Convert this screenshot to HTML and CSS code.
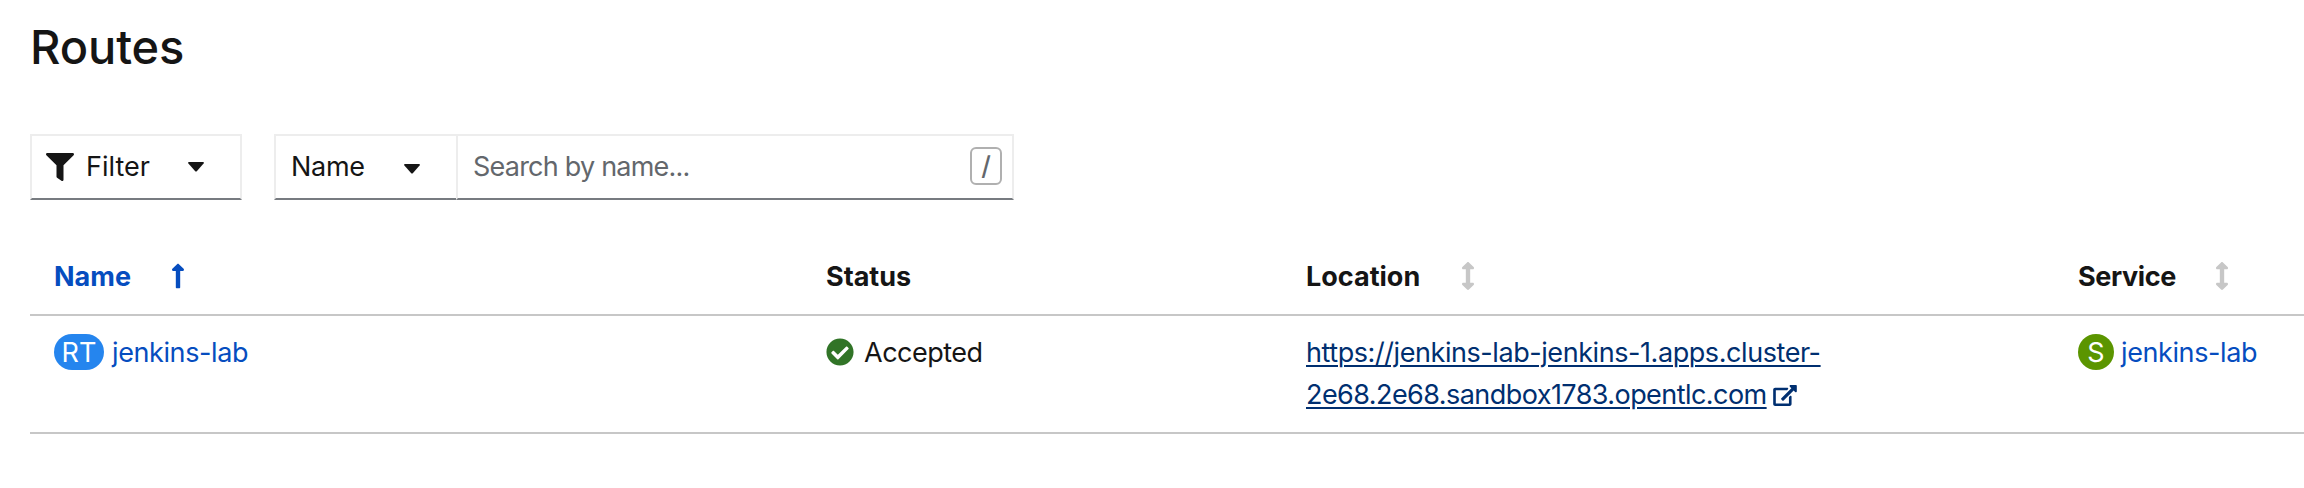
FILE: index.html
```
<!DOCTYPE html>
<html lang="en">
<head>
<meta charset="utf-8">
<title>Routes</title>
<link rel="stylesheet" href="styles.css">
</head>
<body>
<svg class="defs" width="0" height="0">
  <symbol id="sort" viewBox="0 0 256 512"><path d="M214.059 377.941H168V134.059h46.059c21.382 0 32.09-25.851 16.971-40.971L144.971 7.029c-9.373-9.373-24.568-9.373-33.941 0L24.971 93.088c-15.119 15.119-4.411 40.971 16.971 40.971H88v243.882H41.941c-21.382 0-32.09 25.851-16.971 40.971l86.059 86.059c9.373 9.373 24.568 9.373 33.941 0l86.059-86.059c15.12-15.119 4.412-40.971-16.97-40.971z"/></symbol>
  <symbol id="caret" viewBox="0 0 16 10"><path d="M.9 0h14.2q1.300 .3.500 1.500L9 9q-1 1-2 0L.4 1.500Q-.4.300.9 0z"/></symbol>
</svg>
<main class="page">
  <h1 class="title">Routes</h1>
  <div class="toolbar">
    <button class="control filter">
      <svg class="filter-icon" viewBox="0 0 512 512"><path d="M487.976 0H24.028C2.71 0-8.047 25.866 7.058 40.971L192 225.941V432c0 7.831 3.821 15.170 10.237 19.662l80 55.980C298.020 518.690 320 507.493 320 487.980V225.941l184.947-184.970C520.021 25.896 509.338 0 487.976 0z"/></svg>
      <span class="filter-label">Filter</span>
      <svg class="caret"><use href="#caret"/></svg>
    </button>
    <div class="search-group">
      <button class="control attribute"><span class="attribute-label">Name</span><svg class="caret caret-low"><use href="#caret"/></svg></button>
      <div class="control search"><span class="placeholder">Search by name...</span><kbd class="key">/</kbd></div>
    </div>
  </div>
  <div class="table">
    <div class="row head">
      <div class="cell sorted"><span class="name-label">Name</span>
        <svg class="sort-icon" viewBox="0 0 256 512"><path d="M88 166.059V468c0 6.627 5.373 12 12 12h56c6.627 0 12-5.373 12-12V166.059h46.059c21.382 0 32.090-25.851 16.971-40.971l-86.059-86.059c-9.373-9.373-24.569-9.373-33.941 0l-86.059 86.059c-15.119 15.119-4.411 40.971 16.971 40.971H88z"/></svg>
      </div>
      <div class="cell">Status</div>
      <div class="cell"><span>Location</span><svg class="sort-icon"><use href="#sort"/></svg></div>
      <div class="cell"><span class="service-label">Service</span><svg class="sort-icon"><use href="#sort"/></svg></div>
    </div>
    <div class="row body">
      <div class="cell"><span class="badge route">RT</span><a class="link">jenkins-lab</a></div>
      <div class="cell">
        <svg class="check" viewBox="0 0 512 512"><path d="M504 256c0 136.967-111.033 248-248 248S8 392.967 8 256 119.033 8 256 8s248 111.033 248 248zM227.314 387.314l184-184c6.248-6.248 6.248-16.379 0-22.627l-22.627-22.627c-6.248-6.249-16.379-6.249-22.628 0L216 308.118l-70.059-70.059c-6.248-6.248-16.379-6.248-22.628 0l-22.627 22.627c-6.248 6.248-6.248 16.379 0 22.627l104 104c6.249 6.249 16.379 6.249 22.628.001z"/></svg>
        <span class="accepted">Accepted</span>
      </div>
      <div class="cell location">
        <a class="url url-first">https://jenkins-lab-jenkins-1.apps.cluster-</a>
        <div class="url-end"><a class="url url-second">2e68.2e68.sandbox1783.opentlc.com</a>
        <svg class="external" viewBox="0 0 576 512"><path d="M576 24v127.984c0 21.461-25.960 31.980-40.971 16.971l-35.707-35.709-243.523 243.523c-9.373 9.373-24.568 9.373-33.941 0l-22.627-22.627c-9.373-9.373-9.373-24.569 0-33.941L442.756 76.676l-35.703-35.705C391.982 25.900 402.656 0 424.024 0H552c13.255 0 24 10.745 24 24zM407.029 270.794l-16 16A23.999 23.999 0 0 0 384 303.765V448H64V128h264a24.003 24.003 0 0 0 16.970-7.029l16-16C376.089 89.851 365.381 64 344 64H48C21.490 64 0 85.490 0 112v352c0 26.510 21.490 48 48 48h352c26.510 0 48-21.490 48-48V287.764c0-21.382-25.852-32.090-40.971-16.970z"/></svg></div>
      </div>
      <div class="cell"><span class="badge service">S</span><a class="link">jenkins-lab</a></div>
    </div>
  </div>
</main>
</body>
</html>
```
FILE: styles.css
```
* { box-sizing: border-box; }
body {
  margin: 0;
  background: #fff;
  color: #151515;
  font: 27px/42px Inter, "Liberation Sans", sans-serif;
  overflow: hidden;
}
svg { fill: currentColor; flex: none; display: block; }
.defs { position: absolute; }
.page { padding: 16px 0 0 30px; height: 488px; }
.title {
  margin: 0;
  font-size: 47px;
  font-weight: 550;
  line-height: 62px;
  letter-spacing: -.1px;
}
.toolbar { display: flex; gap: 32px; margin-top: 56px; }
.control {
  display: flex;
  align-items: center;
  height: 66px;
  padding: 0;
  border: 2px solid #ededed;
  border-bottom-color: #777b80;
  background: #fff;
  color: #151515;
  font: inherit;
}
.filter { width: 212px; padding-left: 14px; }
.filter-icon { width: 28px; height: 28px; }
.filter-label { width: 114px; padding-left: 12px; text-align: left; }
.caret { width: 16px; height: 10px; }
.caret-low { margin-top: 3px; }
.search-group { display: flex; width: 740px; }
.attribute { width: 182px; padding-left: 15px; border-right: 0; }
.attribute-label { width: 113px; text-align: left; letter-spacing: -.3px; }
.search { flex: 1; justify-content: space-between; padding: 0 10px 0 15px; }
.placeholder { color: #63676c; letter-spacing: -.78px; }
.key {
  width: 32px;
  height: 38px;
  margin-bottom: 3px;
  border: 2px solid #b0b0b0;
  border-radius: 6px;
  color: #63676c;
  font: 500 26px/33px Inter, sans-serif;
  text-align: center;
}
.table { margin-top: 36px; }
.row {
  display: grid;
  grid-template-columns: 772px 480px 772px 250px;
  padding-left: 24px;
  border-bottom: 2px solid #c7c7c7;
}
.cell { display: flex; min-width: 0; }
.head { height: 80px; padding-top: 20px; font-weight: 650; }
.head .cell { gap: 41px; }
.sorted { color: #064dbf; }
.name-label { margin-right: -1px; }
.service-label { margin-right: -2px; letter-spacing: -.4px; }
.sort-icon { width: 14px; height: 28px; margin-top: 6px; fill: #c7c7c7; }
.sorted .sort-icon { fill: currentColor; }
.body { height: 118px; padding-top: 16px; }
.badge {
  height: 36px;
  margin-top: 2px;
  border-radius: 18px;
  color: #fff;
  line-height: 38px;
  text-align: center;
}
.route { width: 50px; margin-right: 8px; background: #2585ee; }
.service { width: 36px; margin-right: 7px; background: #5b9500; }
.link { color: #064dbf; letter-spacing: -.4px; }
.check { width: 28px; height: 28px; margin-top: 6px; fill: #317427; }
.accepted { margin-left: 10px; letter-spacing: -.5px; }
.location { flex-direction: column; color: #002f70; }
.url {
  white-space: nowrap;
  text-decoration: underline;
  text-decoration-thickness: 2px;
  text-underline-offset: 3px;
}
.url-first { letter-spacing: -.43px; }
.url-second { letter-spacing: -.56px; }
.url-end { display: flex; }
.external { width: 24px; height: 21px; margin: 11px 0 0 6px; }
```
